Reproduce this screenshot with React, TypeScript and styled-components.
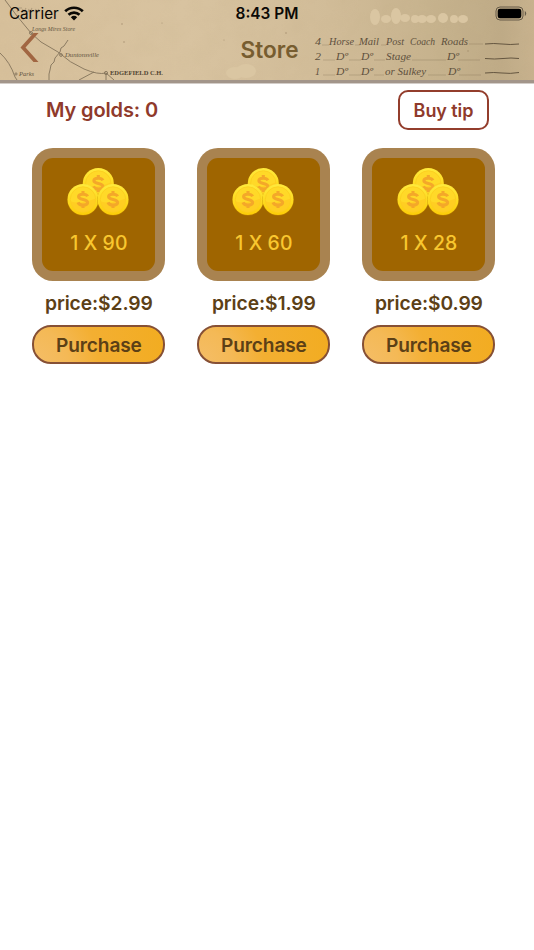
import React from "react";
import styled, { createGlobalStyle } from "styled-components";

const GlobalStyle = createGlobalStyle`
  * { box-sizing: border-box; }
  body { margin: 0; background: #fff; font-family: Inter, "Liberation Sans", sans-serif; }
`;

const Screen = styled.main`
  width: 534px;
  height: 950px;
  overflow: hidden;
  background: #fff;
`;

const Header = styled.header`
  position: relative;
  height: 83px;
  border-bottom: 3px solid #a2958a;
  box-shadow: 0 1px 0 #d3cdc8;
  background: #d5bf9b;
`;

const MapArt = styled.svg`
  position: absolute;
  inset: 0;
  display: block;
`;

const StatusBar = styled.div`
  position: relative;
  display: grid;
  grid-template-columns: 1fr auto 1fr;
  align-items: center;
  height: 28px;
  padding: 0 7px 0 9px;
  color: #0b0906;
`;

const Carrier = styled.div`
  display: flex;
  align-items: center;
  gap: 5px;
  font-size: 15.2px;
  line-height: 20px;
  svg { display: block; margin-top: -2px; }
`;

const Clock = styled.div`
  margin-right: 2px;
  font-size: 15.4px;
  font-weight: 600;
  line-height: 20px;
`;

const Battery = styled.svg`
  display: block;
  justify-self: end;
  margin-top: -2px;
`;

const NavBar = styled.nav`
  position: relative;
  display: grid;
  grid-template-columns: 80px 1fr 80px;
  height: 52px;
`;

const BackButton = styled.button`
  display: flex;
  padding: 4px 0 0 20px;
  border: 0;
  background: none;
`;

const Title = styled.h1`
  margin: 8px 0 0 5px;
  text-align: center;
  color: #775d30;
  font-size: 22.6px;
  font-weight: 600;
  line-height: 28px;
`;

const Balance = styled.section`
  display: flex;
  justify-content: space-between;
  align-items: center;
  padding: 7px 45px 0 46px;
  color: #8f3a2b;
`;

const Golds = styled.div`
  font-size: 20px;
  font-weight: 600;
  letter-spacing: -0.12px;
  line-height: 40px;
`;

const TipButton = styled.button`
  width: 91px;
  height: 40px;
  padding: 0;
  border: 2px solid #933d2c;
  border-radius: 10px;
  background: #fff;
  color: #8f3a2b;
  font: 600 18px/37px Inter, sans-serif;
  letter-spacing: -0.08px;
`;

const Products = styled.section`
  display: grid;
  grid-template-columns: repeat(3, 133px);
  column-gap: 32px;
  padding: 18px 0 0 32.4px;
`;

const Product = styled.article`
  display: flex;
  flex-direction: column;
  align-items: center;
`;

const Tile = styled.div`
  width: 133px;
  height: 133px;
  padding: 10px;
  border-radius: 21px;
  background: #a98350;
`;

const TileFill = styled.div`
  display: flex;
  flex-direction: column;
  align-items: center;
  width: 113px;
  height: 113px;
  padding-top: 9px;
  border-radius: 11px;
  background: #9f6500;
  svg { display: block; margin-left: -1px; }
`;

const Amount = styled.div`
  margin-top: 14px;
  color: #f9c72f;
  font-size: 19.4px;
  font-weight: 500;
  letter-spacing: 0.1px;
  line-height: 24px;
`;

const Price = styled.div`
  margin-top: 10px;
  color: #5c4016;
  font-size: 19.3px;
  font-weight: 600;
  letter-spacing: -0.1px;
  line-height: 24px;
  white-space: nowrap;
`;

const PurchaseButton = styled.button`
  width: 133px;
  height: 39px;
  margin-top: 10px;
  padding: 0;
  border: 2px solid #865035;
  border-radius: 19px;
  background: radial-gradient(circle at 0 100%, #f5be68 0%, #f4b956 26%, #f3af32 48%, #f2ac20 100%) border-box;
  color: #5c4016;
  font: 600 19.1px/36px Inter, sans-serif;
  letter-spacing: -0.12px;
`;

type Cell = [string, number, number];

const legend: { y: number; cells: Cell[] }[] = [
  { y: 45, cells: [["4", 315, 6], ["Horse", 329, 25], ["Mail", 359, 20], ["Post", 386, 18], ["Coach", 410, 25], ["Roads", 441, 27]] },
  { y: 60, cells: [["2", 315, 6], ["Dº", 336, 12], ["Dº", 361, 12], ["Stage", 386, 25], ["Dº", 447, 12]] },
  { y: 75, cells: [["1", 315, 5], ["Dº", 336, 12], ["Dº", 361, 12], ["or Sulkey", 385, 41], ["Dº", 448, 12]] },
];

const places: [string, number, number, number, number][] = [
  ["Longs Mires Store", 32, 31, 43, 6],
  ["Duntonsville", 65, 57, 34, 7],
  ["Parks", 19, 76, 15, 7],
];

const patches: [number, number, number, number][] = [
  [375, 17, 5, 8], [386, 19, 5, 4], [396, 16, 5, 8], [405, 18, 5, 4], [415, 19, 4, 4], [422, 19, 5, 4],
  [431, 19, 5, 4], [443, 18, 5, 5], [454, 19, 4, 4], [463, 19, 5, 4],
];

function OldMap() {
  return (
    <MapArt width="534" height="80" viewBox="0 0 534 80">
      <defs>
        <linearGradient id="paper" x1="0" x2="1">
          <stop offset="0" stopColor="#d7c09b" />
          <stop offset=".35" stopColor="#d8c3a0" />
          <stop offset=".62" stopColor="#d1bc98" />
          <stop offset=".82" stopColor="#c6b28d" />
          <stop offset=".94" stopColor="#bfab87" />
          <stop offset="1" stopColor="#c8b28e" />
        </linearGradient>
        <filter id="grain" x="0" y="0" width="100%" height="100%">
          <feTurbulence type="fractalNoise" baseFrequency=".045" numOctaves="3" seed="8" />
          <feColorMatrix values="0 0 0 0 .45  0 0 0 0 .34  0 0 0 0 .18  .35 0 0 0 -.12" />
        </filter>
      </defs>
      <rect width="534" height="80" fill="url(#paper)" />
      <rect width="534" height="80" filter="url(#grain)" opacity=".35" />
      <g fill="#dac6a2">
        <ellipse cx="235" cy="73" rx="9" ry="6" />
        <ellipse cx="246" cy="71" rx="10" ry="7" />
        {patches.map(([x, y, rx, ry]) => <ellipse key={x} cx={x} cy={y} rx={rx} ry={ry} />)}
      </g>
      <path d="M16 8h6m-3 0-2 4m6-3-1 3m4-4-2 4m5-3-1 3m4-4-2 4m6-3-1 3m4-3-2 3" fill="none" stroke="#756650" strokeWidth="1.1" opacity=".4" />
      <g fill="none" stroke="#756650" strokeWidth=".9" opacity=".85">
        <path d="M5 0 L17 16 31 33 41 42 58 52 Q70 63 84 69 T106 73 L114 80" />
        <path d="M68 40l-4 6-3 2-1 4-5 6-1 4-3 3-1 5-1 4v6M0 53 Q10 62 15 77l2 3M79 80l15-8M106 73v7" />
        <circle cx="31" cy="33" r="1.5" />
        <circle cx="61" cy="55" r="1.4" />
        <circle cx="106" cy="73" r="1.6" />
        <circle cx="16" cy="74" r="1.1" />
      </g>
      <g fill="#635540" fontFamily="Liberation Serif, serif" fontStyle="italic">
        {places.map(([name, x, y, width, size]) => (
          <text key={name} x={x} y={y} fontSize={size} textLength={width} lengthAdjust="spacingAndGlyphs">{name}</text>
        ))}
      </g>
      <text x="110" y="74.5" fill="#504532" fontFamily="Liberation Serif, serif" fontSize="7" fontWeight="700" textLength="53" lengthAdjust="spacingAndGlyphs">EDGEFIELD C.H.</text>
      <g fill="#5e503d" fontFamily="Liberation Serif, serif" fontStyle="italic" fontSize="11.2">
        {legend.map(({ y, cells }) => cells.map(([label, x, width]) => (
          <text key={`${y}-${x}`} x={x} y={y} textLength={width} lengthAdjust="spacingAndGlyphs">{label}</text>
        )))}
      </g>
      <g fill="none" stroke="#655640" strokeWidth="1">
        <path d="M485 44q9-1 17 0t17 0M485 58.5q10 1 18 0t16 0M485 73q9-1 17 0t17-.5" />
        <path d="M322 45h7m26 0h5m21 0h5m83-1h14M323 60h12m14 0h12m13 0h11m27 0h34m12 0h22M323 75h12m14 0h12m13 0h10m44 0h18m13 0h22" strokeWidth=".6" opacity=".4" />
      </g>
      <g fill="#80694b" opacity=".5">
        <circle cx="122" cy="24" r=".8" /><circle cx="124" cy="42" r=".8" />
        <circle cx="286" cy="33" r=".8" /><circle cx="224" cy="40" r=".6" />
        <circle cx="468" cy="51" r=".7" /><circle cx="162" cy="23" r=".6" />
      </g>
    </MapArt>
  );
}

function Coins({ id }: { id: string }) {
  return (
    <svg width="64" height="50" viewBox="0 0 64 50">
      <defs>
        <linearGradient id={id} x1="0" y1="0" x2="0" y2="1">
          <stop offset="0" stopColor="#ffea3c" />
          <stop offset="1" stopColor="#fccc08" />
        </linearGradient>
      </defs>
      {[[32.3, 16.5], [17, 32.5], [47, 32.5]].map(([x, y]) => (
        <g key={x} transform={`translate(${x} ${y})`}>
          <circle cy=".7" r="15.8" fill="#b77900" opacity=".65" />
          <circle r="15.5" fill={`url(#${id})`} />
          <circle r="12.7" fill="#ffd928" stroke="#fbcd1e" strokeWidth=".8" />
          <path d="M-12.5 2Q-2 5 12.5-1A12.6 12.6 0 0 1-12.5 2" fill="#ffc920" opacity=".75" />
          <path d="M4.7-3.2C3.7-5 2-5.3 0-5.3c-2.8 0-4.4 1-4.4 2.6C-4.4 1 4.6-.9 4.6 2.9 4.6 4.7 2.8 5.5 0 5.5c-2.6 0-4.4-1-5-2.6M0-8.5v3M0 5.7v2.9" fill="none" stroke="#f4a829" strokeWidth="3.1" />
        </g>
      ))}
    </svg>
  );
}

const products = [
  { count: "90", price: "$2.99" },
  { count: "60", price: "$1.99" },
  { count: "28", price: "$0.99" },
];

export default function App() {
  return (
    <Screen>
      <GlobalStyle />
      <Header>
        <OldMap />
        <StatusBar>
          <Carrier>
            Carrier
            <svg width="20" height="15" viewBox="0 0 20 15" fill="none" stroke="#0b0906" strokeWidth="2.7">
              <path d="M1.2 5.3a12.7 12.7 0 0 1 17.6 0M4.5 8.8a7.8 7.8 0 0 1 11 0" />
              <path d="M6.8 11.2a4.7 4.7 0 0 1 6.4 0L10 14.4z" fill="#0b0906" stroke="none" />
            </svg>
          </Carrier>
          <Clock>8:43 PM</Clock>
          <Battery width="32" height="15" viewBox="0 0 32 15">
            <rect x="1" y="1" width="27" height="13" rx="4" fill="none" stroke="#665b49" />
            <rect x="2.7" y="2.7" width="23.6" height="9.6" rx="2.3" fill="#000" />
            <path d="M29.8 5v5q1.4-.7 1.4-2.5T29.8 5" fill="#665b49" />
          </Battery>
        </StatusBar>
        <NavBar>
          <BackButton aria-label="Back">
            <svg width="20" height="31" viewBox="0 0 20 31">
              <path d="M13.5 1h5L5.5 15.5 18.5 30h-5L.5 15.5z" fill="#a16642" />
            </svg>
          </BackButton>
          <Title>Store</Title>
        </NavBar>
      </Header>
      <Balance>
        <Golds>My golds: 0</Golds>
        <TipButton>Buy tip</TipButton>
      </Balance>
      <Products>
        {products.map(({ count, price }) => (
          <Product key={count}>
            <Tile>
              <TileFill>
                <Coins id={`coin-${count}`} />
                <Amount>1 X {count}</Amount>
              </TileFill>
            </Tile>
            <Price>price:{price}</Price>
            <PurchaseButton>Purchase</PurchaseButton>
          </Product>
        ))}
      </Products>
    </Screen>
  );
}
